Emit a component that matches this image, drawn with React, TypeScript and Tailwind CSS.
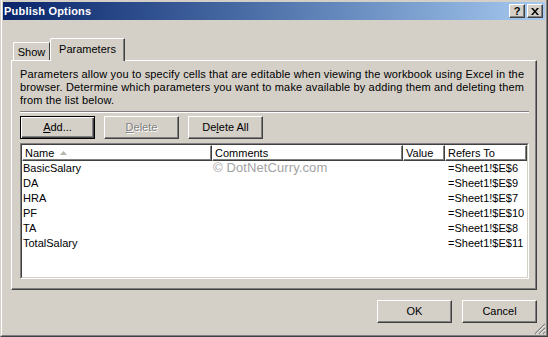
const rows = [
  ["BasicSalary", "=Sheet1!$E$6"],
  ["DA", "=Sheet1!$E$9"],
  ["HRA", "=Sheet1!$E$7"],
  ["PF", "=Sheet1!$E$10"],
  ["TA", "=Sheet1!$E$8"],
  ["TotalSalary", "=Sheet1!$E$11"],
];

const raised =
  "border border-t-white border-l-white border-r-[#404040] border-b-[#404040] shadow-[inset_-1px_-1px_0_#808080]";

function CaptionButton({ children }: { children: React.ReactNode }) {
  return (
    <div
      className={`${raised} grid h-[14px] w-[16px] place-items-center bg-[#d4d0c8] text-[11px] font-bold leading-none text-black`}
    >
      {children}
    </div>
  );
}

function Button({
  children,
  isDefault,
  disabled,
}: {
  children: React.ReactNode;
  isDefault?: boolean;
  disabled?: boolean;
}) {
  return (
    <div
      className={
        isDefault
          ? "grid h-[23px] w-[75px] place-items-center border border-black bg-[#d4d0c8] shadow-[inset_1px_1px_0_#fff,inset_-1px_-1px_0_#404040,inset_-2px_-2px_0_#808080]"
          : `${raised} grid h-[23px] w-[75px] place-items-center bg-[#d4d0c8]`
      }
    >
      <span
        className={
          disabled
            ? "text-[#808080] [text-shadow:1px_1px_0_#fff]"
            : "text-black"
        }
      >
        {children}
      </span>
    </div>
  );
}

function HeaderCell({
  children,
  className,
}: {
  children?: React.ReactNode;
  className: string;
}) {
  return (
    <div
      className={`${raised} flex h-[16px] items-center pl-[2px] leading-none ${className}`}
    >
      {children}
    </div>
  );
}

export default function App() {
  return (
    <div className="h-[337px] w-[548px] overflow-hidden bg-[#d4d0c8] font-['Liberation_Sans',Arial,sans-serif] text-[11px] text-black">
      <div className="relative h-full border-r border-b border-l border-r-[#404040] border-b-[#404040] border-l-[#d4d0c8]">
        <div className="flex h-full flex-col border-r border-b border-l border-r-[#808080] border-b-[#808080] border-l-white px-px pt-[2px] pb-px">
          {/* title bar */}
          <div className="flex h-[18px] shrink-0 items-center justify-between bg-linear-to-r from-[#0a246a] to-[#a6caf0] pr-[2px] pl-px">
            <span className="text-[11px] font-bold tracking-[0.2px] text-white">Publish Options</span>
            <div className="flex gap-[2px]">
              <CaptionButton>?</CaptionButton>
              <CaptionButton>
                <svg width="8" height="7" viewBox="0 0 8 7">
                  <path d="M0 0h2l2 2.5L6 0h2L5 3.5 8 7H6L4 4.5 2 7H0l3-3.5z" fill="#000" />
                </svg>
              </CaptionButton>
            </div>
          </div>

          <div className="flex flex-col px-[8px] pt-[18px]">
            {/* tabs */}
            <div className="flex h-[22px] items-end pl-[2px]">
              <div className="flex h-[18px] w-[37px] items-center justify-center rounded-tl-[2px] border-t border-l border-t-white border-l-white border-r border-r-[#404040] pt-[2px]">
                Show
              </div>
              <div className="relative z-10 -mb-px flex h-[23px] w-[75px] items-start justify-center rounded-tl-[2px] border-t border-l border-t-white border-l-white border-r border-r-[#404040] bg-[#d4d0c8] pt-[2px] shadow-[inset_-1px_0_0_#808080]">
                Parameters
              </div>
            </div>

            {/* panel */}
            <div className="flex h-[230px] flex-col border border-t-white border-l-white border-r-[#404040] border-b-[#404040] pt-[7px] pr-[7px] pl-[8px] shadow-[inset_-1px_-1px_0_#808080]">
              <p className="whitespace-nowrap leading-[13px] tracking-[0.15px]">
                Parameters allow you to specify cells that are editable when viewing the workbook using Excel in the
                <br />
                browser. Determine which parameters you want to make available by adding them and deleting them
                <br />
                from the list below.
              </p>
              <div className="mt-[4px] h-[2px] border-t border-b border-t-[#808080] border-b-white" />

              <div className="mt-[3px] flex gap-[9px]">
                <Button isDefault>
                  <span className="underline">A</span>dd...
                </Button>
                <Button disabled>
                  <span className="underline">D</span>elete
                </Button>
                <Button>
                  De<span className="underline">l</span>ete All
                </Button>
              </div>

              {/* list view */}
              <div className="mt-[4px] h-[136px] border border-t-[#808080] border-l-[#808080] border-r-white border-b-white">
                <div className="relative h-full overflow-hidden border border-t-[#404040] border-l-[#404040] border-r-[#d4d0c8] border-b-[#d4d0c8] bg-white">
                  <div className="flex">
                    <HeaderCell className="w-[190px]">
                      Name
                      <svg className="ml-[6px]" width="7" height="4" viewBox="0 0 7 4">
                        <path d="M3.5 0L7 4H0z" fill="#b8b4ac" />
                      </svg>
                    </HeaderCell>
                    <HeaderCell className="w-[191px]">Comments</HeaderCell>
                    <HeaderCell className="w-[42px]">Value</HeaderCell>
                    <HeaderCell className="flex-1">Refers To</HeaderCell>
                  </div>
                  {rows.map(([name, ref]) => (
                    <div key={name} className="flex h-[15px] items-center leading-[15px]">
                      <div className="w-[190px] pl-px">{name}</div>
                      <div className="w-[191px]" />
                      <div className="w-[42px]" />
                      <div className="flex-1 pl-[3px]">{ref}</div>
                    </div>
                  ))}
                  <span className="absolute top-[15px] left-[191px] text-[13px] leading-[16px] tracking-[0.1px] text-[#a3a3a3]">
                    © DotNetCurry.com
                  </span>
                </div>
              </div>
            </div>

            {/* dialog buttons */}
            <div className="mt-[10px] flex justify-end gap-[10px]">
              <Button>OK</Button>
              <Button>Cancel</Button>
            </div>
          </div>
        </div>

        {/* resize grip */}
        <svg className="absolute right-px bottom-px" width="12" height="12" viewBox="0 0 12 12">
          <path d="M11 1L1 11M11 5L5 11M11 9L9 11" stroke="#808080" strokeWidth="1.2" />
          <path d="M11 2.2L2.2 11M11 6.2L6.2 11M11 10.2L10.2 11" stroke="#fff" strokeWidth="0.8" />
        </svg>
      </div>
    </div>
  );
}
